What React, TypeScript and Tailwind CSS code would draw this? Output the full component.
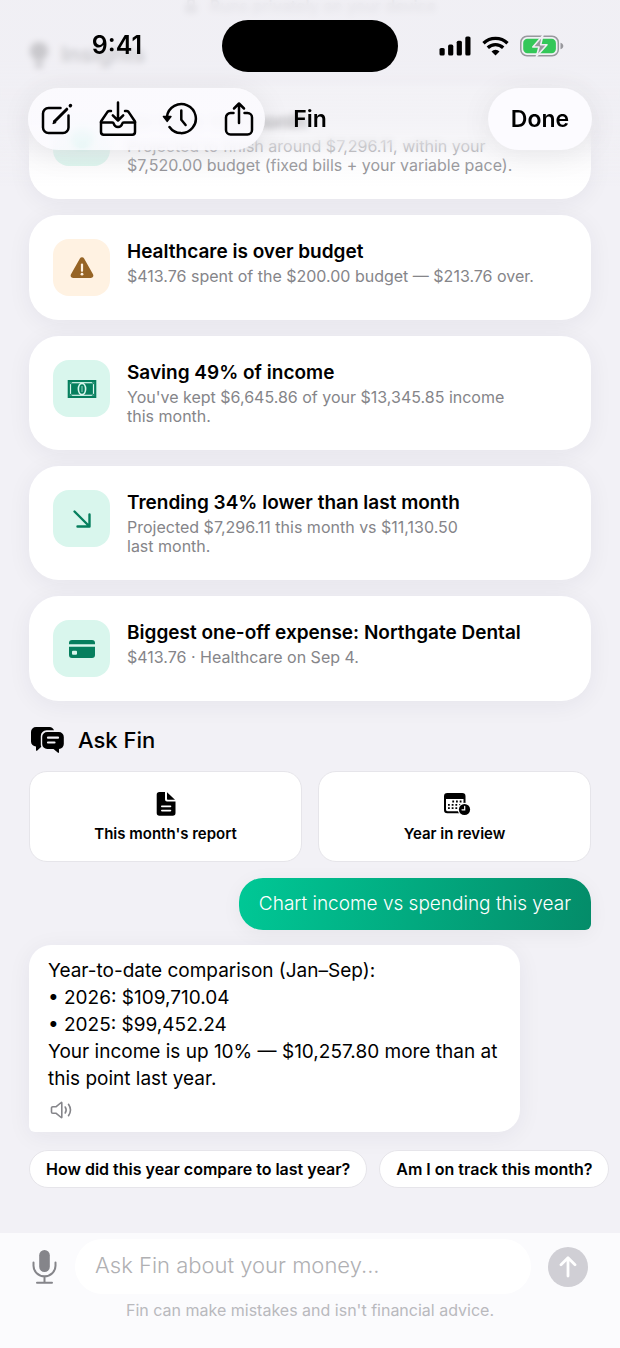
import { useState } from "react";

type Tone = "green" | "amber";

type Insight = {
  title: string;
  body: string;
  tone: Tone;
  icon: React.ReactNode;
};

const WarningIcon = () => (
  <svg width="24" height="22" viewBox="0 0 24 22" fill="none">
    <path
      d="M9.900 1.500a2.400 2.400 0 0 1 4.200 0l8.900 15.800c1 1.700-.2 3.700-2.100 3.700H3.100c-1.900 0-3.100-2-2.100-3.700z"
      fill="#966425"
    />
    <path d="M12 7.500v6.300" stroke="#fff2e2" strokeWidth="2.200" strokeLinecap="round" />
    <circle cx="12" cy="17.200" r="1.400" fill="#fff2e2" />
  </svg>
);

const BanknoteIcon = () => (
  <svg width="30" height="20" viewBox="0 0 30 20" fill="none">
    <rect x="0.700" y="1" width="28.600" height="18" fill="#067f5e" />
    <rect x="3.500" y="3.700" width="23" height="12.600" stroke="#d9f6ed" strokeWidth="1.200" />
    <path d="M3 3.200h2.400L3 5.600zM27 3.200v2.400l-2.400-2.400zM3 16.800v-2.400l2.400 2.400zM27 16.800h-2.400l2.400-2.400z" fill="#067f5e" />
    <ellipse cx="15" cy="10" rx="3.600" ry="5.600" fill="#067f5e" stroke="#d9f6ed" strokeWidth="1.600" />
    <path d="M15 7v6" stroke="#d9f6ed" strokeWidth="0.700" />
  </svg>
);

const ArrowDownRightIcon = () => (
  <svg width="20" height="20" viewBox="0 0 20 20" fill="none">
    <path
      d="M2.500 2.500l14.500 14.500M17.500 5.500v12H5.500"
      stroke="#067f5e"
      strokeWidth="2.400"
      strokeLinecap="round"
      strokeLinejoin="round"
    />
  </svg>
);

const CardIcon = () => (
  <svg width="28" height="20" viewBox="0 0 28 20" fill="#067f5e">
    <path d="M1 5.200V4a3 3 0 0 1 3-3h20a3 3 0 0 1 3 3v1.200z" />
    <path
      fillRule="evenodd"
      d="M1 7.800h26V16a3 3 0 0 1-3 3H4a3 3 0 0 1-3-3zM5 11.800a1 1 0 0 0-1 1v2a1 1 0 0 0 1 1h3a1 1 0 0 0 1-1v-2a1 1 0 0 0-1-1z"
    />
  </svg>
);

const TrackIcon = () => (
  <svg width="28" height="28" viewBox="0 0 28 28">
    <circle cx="14" cy="13" r="11" fill="#00d89e" />
    <path d="M9.500 13l3.500 3.500 6-7" stroke="#d9f6ed" strokeWidth="2" fill="none" />
  </svg>
);

const insights: Insight[] = [
  {
    title: "On track this month",
    body: "Projected to finish around $7,296.11, within your\n$7,520.00 budget (fixed bills + your variable pace).",
    tone: "green",
    icon: <TrackIcon />,
  },
  {
    title: "Healthcare is over budget",
    body: "$413.76 spent of the $200.00 budget — $213.76 over.",
    tone: "amber",
    icon: <WarningIcon />,
  },
  {
    title: "Saving 49% of income",
    body: "You've kept $6,645.86 of your $13,345.85 income\nthis month.",
    tone: "green",
    icon: <BanknoteIcon />,
  },
  {
    title: "Trending 34% lower than last month",
    body: "Projected $7,296.11 this month vs $11,130.50\nlast month.",
    tone: "green",
    icon: <ArrowDownRightIcon />,
  },
  {
    title: "Biggest one-off expense: Northgate Dental",
    body: "$413.76 · Healthcare on Sep 4.",
    tone: "green",
    icon: <CardIcon />,
  },
];

const suggestions = ["How did this year compare to last year?", "Am I on track this month?"];

const toneClass: Record<Tone, string> = {
  green: "bg-[#d9f6ed]",
  amber: "bg-[#fff2e2]",
};

function InsightCard({ title, body, tone, icon }: Insight) {
  return (
    <li className="flex items-start gap-[17px] rounded-[30px] bg-white p-6 shadow-[0_4px_24px_rgba(30,30,60,0.06)]">
      <div className={`flex size-[57px] shrink-0 items-center justify-center rounded-2xl ${toneClass[tone]}`}>
        {icon}
      </div>
      <div className="min-w-0">
        <h3 className="text-[19px] leading-[26px] font-semibold text-black">{title}</h3>
        <p className="mt-0.5 text-base leading-[19px] whitespace-pre-line text-[#858589]">{body}</p>
      </div>
    </li>
  );
}

function StatusBar() {
  return (
    <div className="grid grid-cols-[1fr_176px_1fr] items-center pt-5">
      <span className="pl-3 text-center text-[25px] font-semibold">9:41</span>
      <div className="h-[52px] rounded-full bg-black" />
      <div className="flex items-center justify-center gap-[11px] pr-4">
        <svg width="32" height="20" viewBox="0 0 32 20">
          <rect x="0.500" y="12" width="5.200" height="7.500" rx="1.600" />
          <rect x="9.100" y="8.600" width="5.200" height="10.900" rx="1.600" />
          <rect x="17.700" y="4.700" width="5.200" height="14.800" rx="1.600" />
          <rect x="26.300" y="0.500" width="5.200" height="19" rx="1.600" />
        </svg>
        <svg width="27" height="20" viewBox="0 0 27 20" fill="none" stroke="#000" strokeWidth="3.300">
          <path d="M1.500 7.200a17.200 17.200 0 0 1 24 0" />
          <path d="M5.800 11.700a11 11 0 0 1 15.400 0" />
          <path d="M13.500 19.500l-4-4.100a5.800 5.800 0 0 1 8 0z" fill="#000" stroke="none" />
        </svg>
        <svg width="44" height="22" viewBox="0 0 44 22" fill="none">
          <rect x="0.800" y="1.300" width="37.500" height="19.400" rx="6.200" stroke="#98989d" strokeWidth="1.500" />
          <rect x="3.200" y="3.700" width="32.700" height="14.600" rx="4.200" fill="#34c759" />
          <path d="M40.500 7.800c1.800.6 2.800 1.700 2.800 3.200s-1 2.600-2.800 3.200z" fill="#98989d" />
          <path
            d="M22.800 0.500L12.800 12h6.200l-2.600 9.500L27 9.800h-6.300z"
            fill="#98989d"
            stroke="#f0eff4"
            strokeWidth="1.600"
            strokeLinejoin="round"
          />
        </svg>
      </div>
    </div>
  );
}

function TopBar() {
  const iconProps = {
    fill: "none",
    stroke: "#000",
    strokeWidth: 2.5,
    strokeLinecap: "round" as const,
    strokeLinejoin: "round" as const,
  };
  return (
    <div className="grid grid-cols-[1fr_auto_1fr] items-center px-7 pt-4">
      <div className="flex h-[62px] w-[237px] items-center justify-between rounded-full bg-linear-to-b from-[#fcfbff]/90 from-60% to-[#fcfbff]/80 pr-[11px] pl-[13px] shadow-[0_4px_30px_rgba(0,0,0,0.08)] backdrop-blur-[3px]">
        <button aria-label="New chat">
          <svg width="32" height="36" viewBox="0 0 32 36" {...iconProps}>
            <path d="M19.500 7H7.500A5.500 5.500 0 0 0 2 12.500v14A5.500 5.500 0 0 0 7.500 32h14.500a5.500 5.500 0 0 0 5.500-5.500V14.500" />
            <path d="M13.500 20.500L25.800 8.200" strokeWidth="3" />
            <path d="M29.300 4.700l.2-.2" strokeWidth="3.400" />
            <path d="M12 22.400l1-2.700 1.700 1.700z" fill="#000" strokeWidth="1" />
          </svg>
        </button>
        <button aria-label="Save to inbox">
          <svg width="38" height="36" viewBox="0 0 38 36" {...iconProps}>
            <path d="M19 1.500V19M13.800 14.300L19 19.500l5.200-5.200" />
            <path d="M12 10h-1.500a2.600 2.600 0 0 0-2 .9L2 20.500V31a2.700 2.700 0 0 0 2.700 2.700h28.600A2.700 2.700 0 0 0 36 31V20.500l-6.500-9.600a2.600 2.600 0 0 0-2-.9H26" />
            <path d="M2 21.500h11.300c.8 0 1.300.5 1.500 1.300.5 2 2 3.200 4.200 3.200s3.700-1.200 4.200-3.200c.2-.8.7-1.300 1.500-1.300H36" />
          </svg>
        </button>
        <button aria-label="History">
          <svg width="36" height="36" viewBox="0 0 36 36" {...iconProps}>
            <path d="M5 15.500A14.500 14.500 0 1 1 7.500 26" />
            <path d="M1.500 15.500h7.400l-3.700 4.800z" fill="#000" strokeWidth="1.600" />
            <path d="M19.300 9.500v9.300l4.300 5.200" />
          </svg>
        </button>
        <button aria-label="Share">
          <svg width="30" height="36" viewBox="0 0 30 36" {...iconProps}>
            <path d="M9.500 12H6.500A4.500 4.500 0 0 0 2 16.500v12.500A4.500 4.500 0 0 0 6.500 33.500h17A4.500 4.500 0 0 0 28 29V16.500a4.500 4.500 0 0 0-4.500-4.500h-3" />
            <path d="M15 22V3M10 7.500l5-5 5 5" />
          </svg>
        </button>
      </div>
      <h1 className="text-[23px] font-semibold">Fin</h1>
      <button className="h-[62px] w-[104px] justify-self-end rounded-full bg-[#fcfbff] text-[23px] font-semibold shadow-[0_4px_30px_rgba(0,0,0,0.08)]">
        Done
      </button>
    </div>
  );
}

export default function App() {
  const [question, setQuestion] = useState("");

  return (
    <div className="flex min-h-screen flex-col overflow-x-hidden bg-[#f2f1f6] font-['Inter',sans-serif] text-black">
      {/* header floats over the scrolled content */}
      <header className="fixed inset-x-0 top-0 z-10 h-[200px]">
        <div className="absolute inset-0 mask-[linear-gradient(to_bottom,black_65%,transparent_78%)] backdrop-blur-[3px]" />
        <div className="absolute inset-0 bg-[linear-gradient(to_bottom,rgba(240,239,244,0.84)_30%,rgba(240,239,244,0.76)_60%,rgba(240,239,244,0.5)_74%,rgba(240,239,244,0.2)_83%,rgba(240,239,244,0)_94%)]" />
        <div className="relative">
          <StatusBar />
          <TopBar />
        </div>
      </header>

      <main className="flex flex-1 flex-col px-[29px]">
        <p className="flex h-3 items-center justify-center gap-3 text-base leading-3 font-medium text-[#a0a0a5]">
          <svg width="14" height="16" viewBox="0 0 14 16" fill="#a0a0a5">
            <rect x="1" y="7" width="12" height="8" rx="2" />
            <path d="M4 7V4.500a3 3 0 0 1 6 0V7" fill="none" stroke="#a0a0a5" strokeWidth="2" />
          </svg>
          Runs privately on your device
        </p>
        <section>
          <h2 className="flex items-center gap-3 pt-7 pb-4 text-[22px] leading-[29px] font-semibold">
            <svg width="20" height="26" viewBox="0 0 20 26">
              <path d="M10 0a9 9 0 0 1 5 16.500V19H5v-2.500A9 9 0 0 1 10 0zM6 21h8v2a3 3 0 0 1-3 3H9a3 3 0 0 1-3-3z" />
            </svg>
            Insights
          </h2>
          <ul className="flex flex-col gap-4">
            {insights.map((item) => (
              <InsightCard key={item.title} {...item} />
            ))}
          </ul>
        </section>

        <section className="flex flex-col">
          <h2 className="flex items-center gap-[13px] px-px pt-6 pb-4 text-[22px] leading-[30px] font-medium">
            <svg width="35" height="30" viewBox="0 0 35 30">
              <path d="M6 2h13.500a5 5 0 0 1 4.500 3.300H16.500a5.700 5.700 0 0 0-5.700 5.700v8.500c0 .8.200 1.500.5 2.200L7.300 25.500c-.8.600-1.300.3-1.300-.6v-3.500a5 5 0 0 1-5-5V7a5 5 0 0 1 5-5z" />
              <path
                fillRule="evenodd"
                d="M17.200 7h11.600a5 5 0 0 1 5 5v7a5 5 0 0 1-4.800 5v3c0 .9-.6 1.200-1.300.6L23.500 24h-6.300a5 5 0 0 1-5-5v-7a5 5 0 0 1 5-5zm.8 4.600a1.100 1.100 0 0 0 0 2.200h10a1.100 1.100 0 0 0 0-2.200zm0 4.800a1.100 1.100 0 0 0 0 2.200h6.500a1.100 1.100 0 0 0 0-2.200z"
              />
            </svg>
            Ask Fin
          </h2>
          <div className="grid grid-cols-2 gap-4">
            <button className="flex h-[91px] flex-col items-center justify-center gap-[5px] rounded-[18px] border border-[#e6e5ea] bg-white pt-[3px] text-[15px] leading-6 font-semibold">
              <svg width="20" height="26" viewBox="0 0 20 26">
                <path
                  fillRule="evenodd"
                  d="M3.500 1H9v7.500a2 2 0 0 0 2 2h8.500V22a2.800 2.800 0 0 1-2.800 2.800H3.500A2.800 2.800 0 0 1 .7 22V3.800A2.800 2.800 0 0 1 3.500 1zm2.300 13.600a.8.8 0 0 0 0 1.600h8.700a.8.8 0 0 0 0-1.600zm0 4.200a.8.8 0 0 0 0 1.600h8.700a.8.8 0 0 0 0-1.600z"
                />
                <path d="M11 1.200V8a.8.8 0 0 0 .8.800h7.200z" />
              </svg>
              This month's report
            </button>
            <button className="flex h-[91px] flex-col items-center justify-center gap-[5px] rounded-[18px] border border-[#e6e5ea] bg-white pt-[3px] text-[15px] leading-6 font-semibold">
              <svg width="32" height="26" viewBox="-4 0 32 26">
                <path
                  fillRule="evenodd"
                  d="M4.300 2h14.900a3.300 3.300 0 0 1 3.300 3.300V19a3.300 3.300 0 0 1-3.300 3.300H4.300A3.300 3.300 0 0 1 1 19V5.300A3.300 3.300 0 0 1 4.300 2zM3 8v10.500c0 1 .7 1.700 1.700 1.700h14.100c1 0 1.700-.7 1.700-1.700V8z"
                />
                <path d="M9.300 10.500h10M5 13.800h14.300M5 17.200h11" stroke="#000" strokeWidth="1.800" strokeDasharray="1.800 1.900" />
                <circle cx="21.500" cy="18.500" r="6.800" fill="#fff" />
                <circle cx="21.500" cy="18.500" r="5.600" />
                <path d="M21.700 15.300v3.500h-2.700" stroke="#fff" strokeWidth="1.200" fill="none" strokeLinecap="round" />
              </svg>
              Year in review
            </button>
          </div>

          <p className="mt-4 self-end rounded-[24px] rounded-br-md bg-linear-[100deg,#00c896,#048c69] px-5 py-3 text-[19px] leading-7 font-light text-white shadow-[0_4px_20px_rgba(0,0,0,0.05)]">
            Chart income vs spending this year
          </p>

          <div className="mt-[15px] w-[491px] max-w-full rounded-[22px] rounded-bl-md bg-white px-[19px] py-3 shadow-[0_4px_24px_rgba(30,30,60,0.06)]">
            <div className="text-[19px] leading-[27px]">
              <p>Year-to-date comparison (Jan–Sep):</p>
              <p>• 2026: $109,710.04</p>
              <p>• 2025: $99,452.24</p>
              <p>Your income is up 10% — $10,257.80 more than at this point last year.</p>
            </div>
            <button aria-label="Read aloud" className="mt-2 block pl-0.5">
              <svg
                width="24"
                height="20"
                viewBox="0 0 24 20"
                fill="none"
                stroke="#85858a"
                strokeWidth="1.600"
                strokeLinecap="round"
                strokeLinejoin="round"
              >
                <path d="M2.800 6.700h3.400l5-4.200c.3-.3.600-.1.600.3v14.400c0 .4-.3.600-.6.300l-5-4.200H2.800A1.300 1.300 0 0 1 1.500 12V8a1.300 1.300 0 0 1 1.300-1.300z" />
                <path d="M15.200 7a5.500 5.500 0 0 1 0 6M18.500 4.300a10 10 0 0 1 0 11.400" />
              </svg>
            </button>
          </div>

          <div className="-mr-[29px] mt-[18px] flex gap-3 overflow-x-hidden whitespace-nowrap">
            {suggestions.map((text) => (
              <button
                key={text}
                className="h-[38px] shrink-0 rounded-full border border-[#e6e5ea] bg-white px-4 text-base leading-6 font-semibold"
                onClick={() => setQuestion(text)}
              >
                {text}
              </button>
            ))}
          </div>
        </section>
      </main>

      <footer className="sticky bottom-0 bg-[#fbfbfd] pt-1.5 pb-7">
        <form className="flex items-center gap-[17px] pr-8 pl-[31px]" onSubmit={(e) => e.preventDefault()}>
          <button type="button" aria-label="Dictate">
            <svg width="27" height="36" viewBox="0 0 27 36" fill="none" stroke="#85858a" strokeWidth="2" strokeLinecap="round">
              <rect x="8.200" y="1" width="10.600" height="22" rx="5.300" fill="#85858a" stroke="none" />
              <path d="M2.500 13.500v3.200a11 10.600 0 0 0 22 0v-3.200M13.500 27.500v6M6 33.800h15" />
            </svg>
          </button>
          <input
            aria-label="Question"
            className="h-[55px] min-w-0 flex-1 rounded-full bg-white px-5 pb-[3px] text-[22px] outline-none placeholder:font-light placeholder:text-[#b0b0b3]"
            placeholder="Ask Fin about your money..."
            value={question}
            onChange={(e) => setQuestion(e.target.value)}
          />
          <button aria-label="Send" className="flex size-10 items-center justify-center rounded-full bg-[#d0cfd5]">
            <svg width="20" height="24" viewBox="0 0 20 24" fill="none" stroke="#fff" strokeWidth="2.800" strokeLinecap="round" strokeLinejoin="round">
              <path d="M10 21V3M3 9.800L10 2.800l7 7" />
            </svg>
          </button>
        </form>
        <p className="pt-1.5 text-center text-base leading-5 text-[#b9b9bd]">
          Fin can make mistakes and isn't financial advice.
        </p>
      </footer>
    </div>
  );
}
